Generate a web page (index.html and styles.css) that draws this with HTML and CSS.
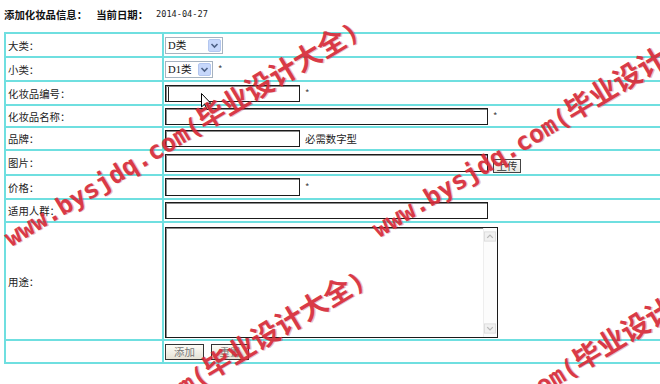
FILE: index.html
```html
<!DOCTYPE html>
<html lang="zh-CN">
<head>
<meta charset="utf-8">
<title>添加化妆品信息</title>
<link rel="stylesheet" href="styles.css">
</head>
<body>
<div class="page">
  <div class="head">
    <span>添加化妆品信息：</span>
    <span class="t2">当前日期：</span>
    <span class="date">2014-04-27</span>
  </div>
  <div class="form">
    <div class="cell lab">大类：</div>
    <div class="cell val">
      <span class="sel w58"><select><option>D类</option></select><span class="dd"><svg width="13" height="13" viewBox="0 0 13 13"><rect x="0.5" y="0.5" width="12" height="12" rx="1.5" fill="#c6d7fb" stroke="#b3c6ef"/><path d="M3.5 5 L6.5 8 L9.5 5" fill="none" stroke="#4d6185" stroke-width="1.6"/></svg></span></span>
    </div>
    <div class="cell lab">小类：</div>
    <div class="cell val">
      <span class="sel w48"><select><option>D1类</option></select><span class="dd"><svg width="13" height="13" viewBox="0 0 13 13"><rect x="0.5" y="0.5" width="12" height="12" rx="1.5" fill="#c6d7fb" stroke="#b3c6ef"/><path d="M3.5 5 L6.5 8 L9.5 5" fill="none" stroke="#4d6185" stroke-width="1.6"/></svg></span></span>
      <span class="star">*</span>
    </div>
    <div class="cell lab">化妆品编号：</div>
    <div class="cell val"><input class="in short caret" type="text"><span class="star">*</span></div>
    <div class="cell lab">化妆品名称：</div>
    <div class="cell val"><input class="in long" type="text"><span class="star">*</span></div>
    <div class="cell lab">品牌：</div>
    <div class="cell val"><input class="in short" type="text"><span class="note">必需数字型</span></div>
    <div class="cell lab">图片：</div>
    <div class="cell val"><input class="in long tall" type="text"><button class="up" type="button">上传</button></div>
    <div class="cell lab">价格：</div>
    <div class="cell val"><input class="in short tall" type="text"><span class="star">*</span></div>
    <div class="cell lab">适用人群：</div>
    <div class="cell val"><input class="in long" type="text"></div>
    <div class="cell lab">用途：</div>
    <div class="cell val">
      <div class="ta">
        <textarea></textarea>
        <div class="sb">
          <span class="arrow"><svg width="13" height="11" viewBox="0 0 13 11"><rect x="0.5" y="0.5" width="12" height="10" fill="#f1f1f1" stroke="#dcdcdc"/><path d="M3.5 7 L6.5 4 L9.5 7" fill="none" stroke="#b8b8b8" stroke-width="1.4"/></svg></span>
          <span class="arrow"><svg width="13" height="11" viewBox="0 0 13 11"><rect x="0.5" y="0.5" width="12" height="10" fill="#f1f1f1" stroke="#dcdcdc"/><path d="M3.5 4 L6.5 7 L9.5 4" fill="none" stroke="#b8b8b8" stroke-width="1.4"/></svg></span>
        </div>
      </div>
    </div>
    <div class="cell lab"></div>
    <div class="cell val btns"><button class="btn" type="button">添加</button><button class="btn b2" type="button">重置</button></div>
  </div>
</div>

<svg class="cursor" width="12" height="18" viewBox="0 0 12 18"><path d="M0.5 0.5 L0.5 14 L3.6 11 L6 16.5 L8 15.6 L5.7 10.3 L9.8 10.3 Z" fill="#fff" stroke="#000" stroke-width="1"/></svg>

<div class="wm wm1"><span class="lat">www.bysjdq.com(</span><span class="cjk">毕业设计大全</span><span class="lat">)</span></div>
<div class="wm wm2"><span class="lat">www.bysjdq.com(</span><span class="cjk">毕业设计大全</span><span class="lat">)</span></div>
<div class="wm wm3"><span class="lat">www.bysjdq.com(</span><span class="cjk">毕业设计大全</span><span class="lat">)</span></div>
<div class="wm wm4"><span class="lat">www.bysjdq.com(</span><span class="cjk">毕业设计大全</span><span class="lat">)</span></div>
</body>
</html>
```

FILE: styles.css
```css
* { box-sizing: border-box; }
html, body { margin: 0; padding: 0; background: #fff; }
body {
  width: 660px;
  height: 384px;
  overflow: hidden;
  position: relative;
  font-family: "Noto Sans CJK SC", "Liberation Sans", sans-serif;
  font-size: 10.4px;
  color: #222;
}
.page { padding: 7px 0 0 4px; }
.head {
  display: flex;
  align-items: center;
  height: 14px;
  margin-bottom: 11px;
  font-weight: bold;
  color: #111;
}
.head .t2 { margin-left: 9px; }
.head .date {
  margin-left: 8px;
  font-family: "DejaVu Sans Mono", monospace;
  font-size: 8.6px;
  font-weight: normal;
  color: #222;
}
.form {
  display: grid;
  grid-template-columns: 158px 540px;
  grid-template-rows: 24px 24px 24px 22px 23px 25px 24px 23px 118px 23px;
  border-left: 2px solid #6fdfe0;
  border-top: 2px solid #6fdfe0;
  width: 700px;
}
.cell {
  display: flex;
  align-items: center;
  border-right: 2px solid #6fdfe0;
  border-bottom: 2px solid #6fdfe0;
  min-width: 0;
}
.lab { padding-left: 2px; }
.val { padding-left: 1px; }

.sel {
  display: inline-flex;
  align-items: center;
  height: 17px;
  border: 1px solid #a6b3c0;
  background: #fff;
  padding-right: 1px;
}
.sel select {
  appearance: none;
  -webkit-appearance: none;
  border: none;
  outline: none;
  background: transparent;
  flex: 1;
  min-width: 0;
  height: 15px;
  padding: 0 0 0 2px;
  font-family: "Liberation Serif", "Noto Sans CJK SC", serif;
  font-size: 10.6px;
  color: #111;
}
.sel .dd { display: flex; }
.w58 { width: 58px; }
.w48 { width: 48px; }

.star {
  margin-left: 5px;
  font-size: 9.5px;
  color: #444;
}
.note { margin-left: 5px; color: #222; }

.in {
  height: 17px;
  border: 1px solid #1b1b1b;
  box-shadow: inset 1px 1px 0 #8a8a8a;
  background: #fff;
  padding: 0 2px;
  font: inherit;
  outline: none;
}
.in.tall { height: 18px; }
.caret { box-shadow: inset 1px 1px 0 #8a8a8a, inset 2px 0 0 #fff, inset 3px 0 0 #222; }
.short { width: 135px; }
.long { width: 323px; }

.up {
  width: 28px;
  height: 14px;
  margin-left: 5px;
  margin-top: 6px;
  padding: 0;
  border: 1px solid #444;
  background: linear-gradient(#fbfbf8, #e9e7e0);
  font: inherit;
  color: #333;
  line-height: 12px;
}

.ta {
  display: flex;
  width: 333px;
  height: 111px;
  margin-top: 2px;
  border: 1px solid #1b1b1b;
  box-shadow: inset 1px 1px 0 #8a8a8a;
  background: #fff;
}
.ta textarea {
  flex: 1;
  border: none;
  outline: none;
  resize: none;
  background: transparent;
  font: inherit;
}
.sb {
  width: 14px;
  display: flex;
  flex-direction: column;
  justify-content: space-between;
  padding: 3px 1px 3px 0;
  border-left: 1px solid #eeeeee;
  background: #fcfcfc;
}
.arrow { display: flex; }

.btns { gap: 7px; padding-top: 1px; }
.btn {
  width: 39px;
  height: 16px;
  padding: 0;
  border: 1px solid #333;
  background: linear-gradient(#fdfcf7, #e6e3d6);
  font: inherit;
  color: #777;
  line-height: 14px;
}
.btn.b2 { width: 38px; }

.cursor {
  position: absolute;
  left: 201px;
  top: 93px;
}

.wm {
  position: absolute;
  white-space: nowrap;
  color: #d62a38;
  font-weight: bold;
  line-height: 28px;
  height: 28px;
  transform: rotate(-31deg);
  transform-origin: 0 100%;
  pointer-events: none;
  opacity: 0.92;
  text-shadow: 1px 1px 0 rgba(140, 0, 10, 0.25);
}
.wm .lat {
  font-family: "DejaVu Sans Mono", monospace;
  font-size: 25px;
}
.wm .cjk {
  font-family: "Noto Sans CJK SC", sans-serif;
  font-size: 28px;
}
.wm1 { left: 12px; top: 221px; }
.wm2 { left: 380px; top: 212px; }
.wm3 { left: 18px; top: 470px; }
.wm4 { left: 388px; top: 462px; }
```
